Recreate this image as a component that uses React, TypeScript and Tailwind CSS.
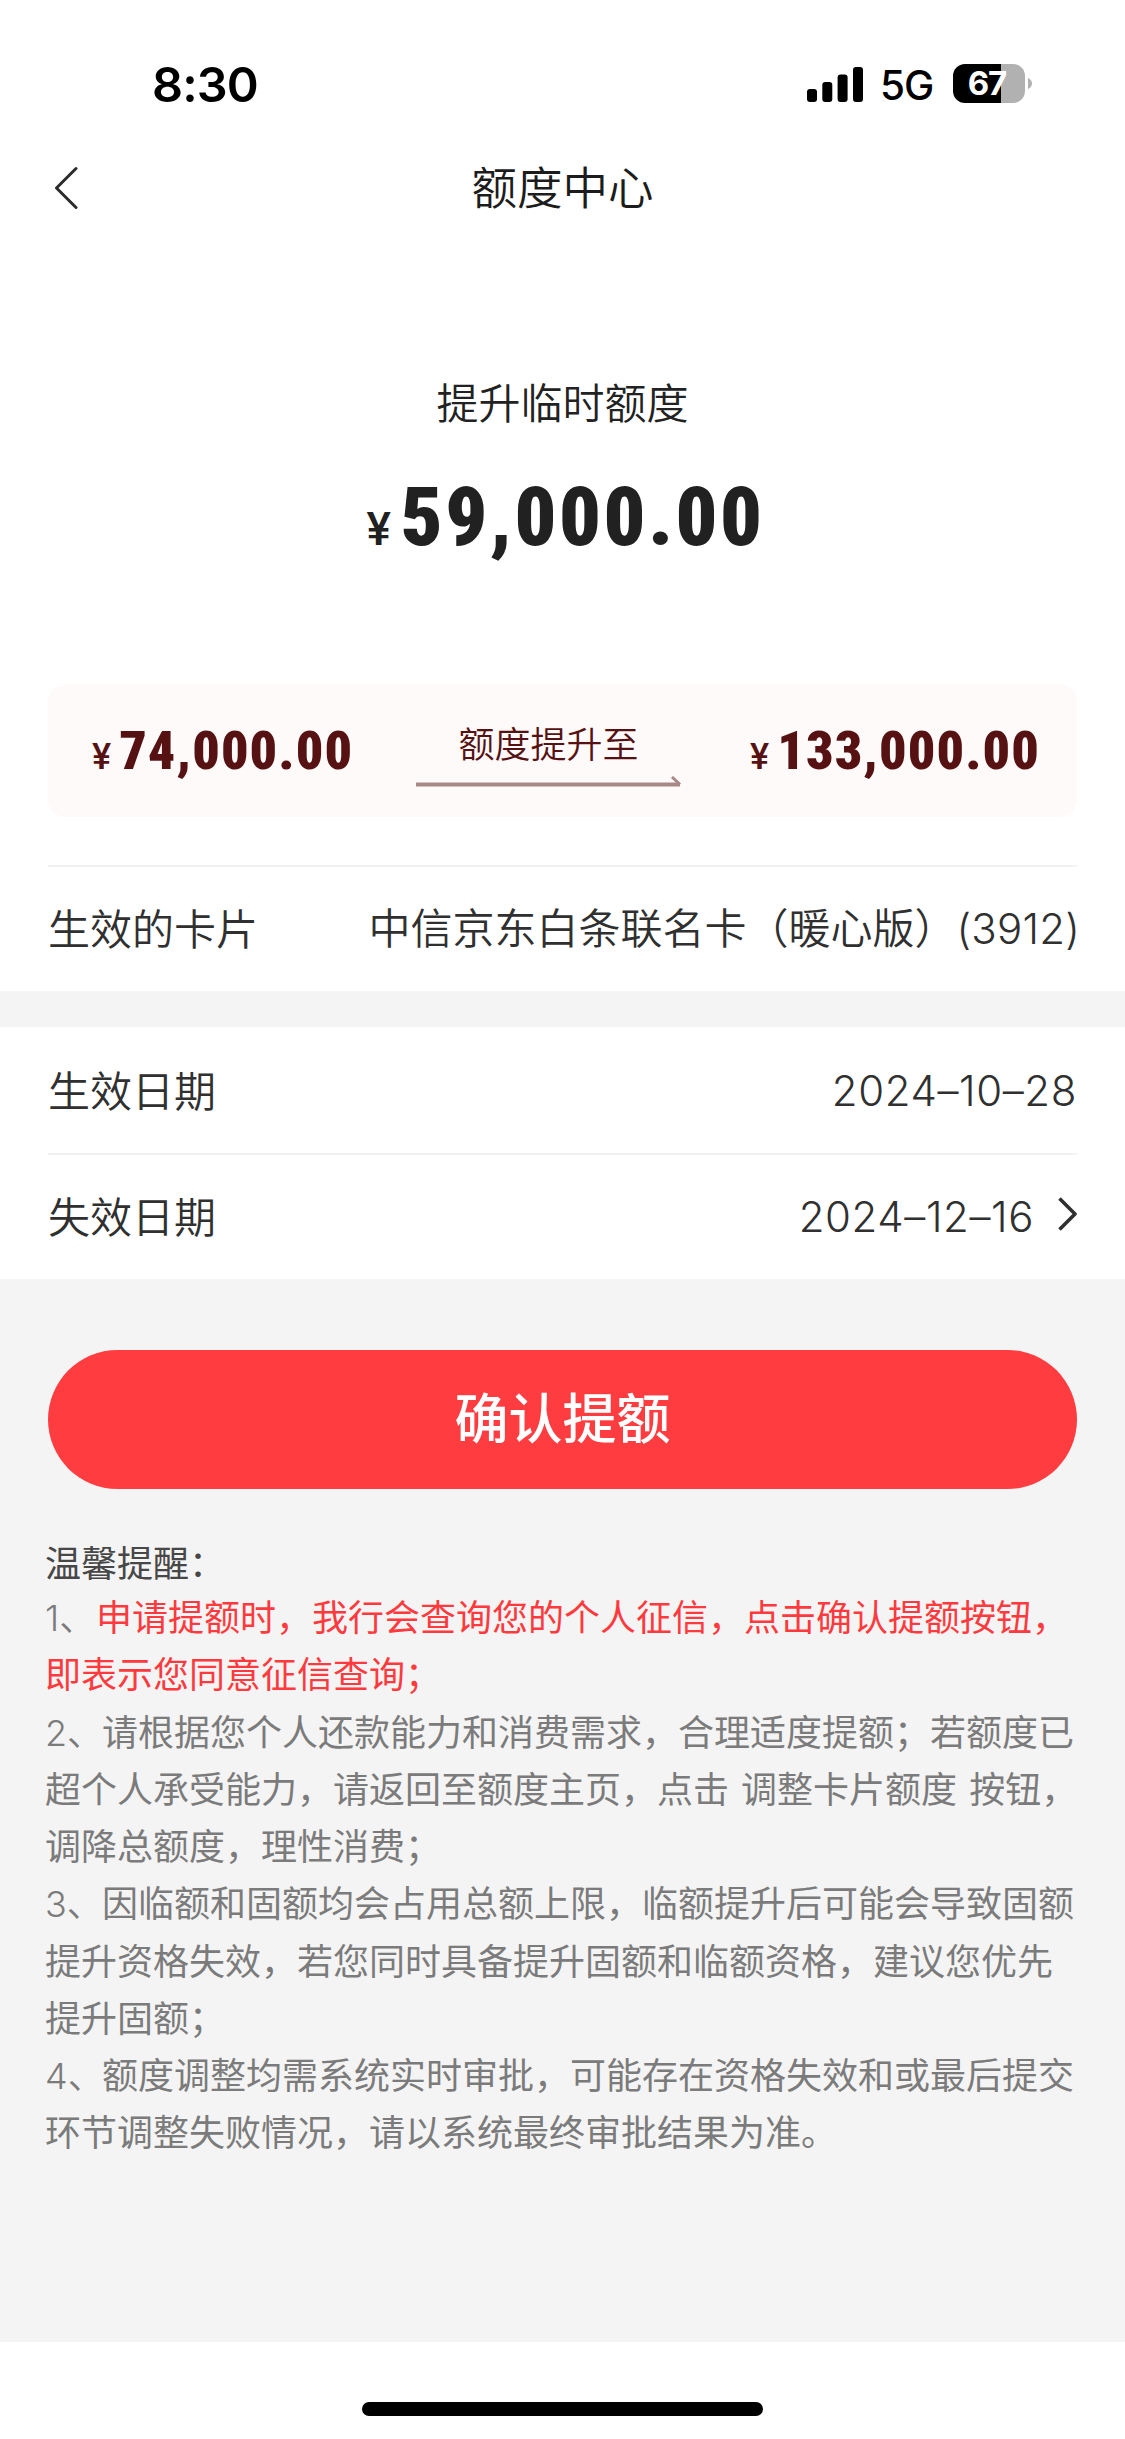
import React from 'react';

const sans = "font-['Inter','Noto_Sans_CJK_SC',sans-serif]";
const cjk = "font-['Noto_Sans_CJK_SC',sans-serif]";

const tips = [
  { mark: '2、', lines: ['请根据您个人还款能力和消费需求，合理适度提额；若额度已', '超个人承受能力，请返回至额度主页，点击 调整卡片额度 按钮，', '调降总额度，理性消费；'] },
  { mark: '3、', lines: ['因临额和固额均会占用总额上限，临额提升后可能会导致固额', '提升资格失效，若您同时具备提升固额和临额资格，建议您优先', '提升固额；'] },
  { mark: '4、', lines: ['额度调整均需系统实时审批，可能存在资格失效和或最后提交', '环节调整失败情况，请以系统最终审批结果为准。'] },
];

const StatusBar = () => (
  <div className="flex h-[130px] items-start justify-between pl-[152px] pr-[93px] pt-16 text-black">
    <span className="pt-px text-[48.5px] font-semibold leading-[40px] tracking-[-0.9px]">8:30</span>
    <div className="flex h-[39px] items-center">
      <svg className="mt-px" width="56" height="35" viewBox="0 0 56 35" fill="currentColor">
        <rect x="0" y="22" width="10" height="13" rx="3" />
        <rect x="15.3" y="15" width="10" height="20" rx="3" />
        <rect x="30.6" y="7.5" width="10" height="27.5" rx="3" />
        <rect x="46" y="0" width="10" height="35" rx="3" />
      </svg>
      <span className="ml-[17px] w-[73px] pt-1 text-[40.5px] font-[450] leading-[39px] tracking-[-1px]">5G</span>
      <div className="flex h-[39px] w-[72px] items-center justify-center overflow-hidden rounded-[12px] bg-[linear-gradient(90deg,#000_48px,#b1b1b1_48px)]">
        <span className="pr-1 text-[33px] font-bold leading-none tracking-[-1px] text-white">67</span>
      </div>
      <svg className="ml-[3px]" width="4" height="11" viewBox="0 0 4 11" fill="#b1b1b1">
        <path d="M0 0C2.4 1 4 3 4 5.5S2.4 10 0 11Z" />
      </svg>
    </div>
  </div>
);

const NavBar = () => (
  <div className="grid h-[116px] grid-cols-[200px_1fr_200px] items-center">
    <button className="pl-[54px]" aria-label="返回">
      <svg width="24" height="44" viewBox="0 0 24 44" fill="none" stroke="#2b2b2b" strokeWidth="3" strokeLinecap="round" strokeLinejoin="round">
        <path d="M22 2.5L2.5 22L22 41.5" />
      </svg>
    </button>
    <h1 className={`${cjk} pb-1 text-center text-[45.5px] font-[350] leading-none text-[#1c1c1c]`}>额度中心</h1>
  </div>
);

const SmallAmount = ({ value }: { value: string }) => (
  <div className="flex items-baseline font-[Roboto,sans-serif] text-[#561213]">
    <span className="text-[36px] font-medium leading-none">¥</span>
    <span className="ml-2 text-[54px] font-black leading-none tracking-[1.1px] [font-stretch:85%]">{value}</span>
  </div>
);

const Row = ({ label, children }: { label: string; children: React.ReactNode }) => (
  <div className="flex h-[124px] items-center justify-between pb-[5px] text-[42px] font-[350] text-[#303030]">
    <span className={cjk}>{label}</span>
    <div className="flex items-center">{children}</div>
  </div>
);

const App = () => {
  return (
    <div className={`${sans} flex h-[2439px] w-[1125px] flex-col overflow-hidden bg-white`}>
      <StatusBar />
      <NavBar />

      <section className="px-12">
        <div className="flex h-[438px] flex-col items-center pt-[134px]">
          <p className={`${cjk} text-[42px] font-[350] leading-[42px] text-[#222]`}>提升临时额度</p>
          <div className="mt-[54px] flex items-baseline pl-1.5 font-[Roboto,sans-serif] text-[#212121]">
            <span className="text-[46px] font-medium leading-none">¥</span>
            <span className="ml-[10px] text-[82px] font-black leading-none tracking-[2.6px] [font-stretch:85%]">59,000.00</span>
          </div>
        </div>

        <div className="flex h-[133px] items-center rounded-[18px] bg-[#fefaf9] pl-[44px] pr-[37px]">
          <div className="w-[324px]">
            <SmallAmount value="74,000.00" />
          </div>
          <div className="flex flex-col items-center pt-2.5">
            <span className={`${cjk} text-[36px] font-[350] leading-[36px] text-[#561213]`}>额度提升至</span>
            <svg className="mt-4" width="265" height="12" viewBox="0 0 265 12" fill="none" stroke="#a98888">
              <path d="M0 8.5H264" strokeWidth="4" />
              <path d="M256 1L264 8.5" strokeWidth="3" />
            </svg>
          </div>
          <div className="ml-auto">
            <SmallAmount value="133,000.00" />
          </div>
        </div>

        <div className="mt-12 border-t-2 border-[#f1f1f1]">
          <Row label="生效的卡片">
            <span className="-mr-[3px]">
              <span className={cjk}>中信京东白条联名卡（暖心版）</span>
              <span className="tracking-[0.2px]">(3912)</span>
            </span>
          </Row>
        </div>
      </section>

      <div className="h-9 shrink-0 bg-[#f4f4f4]" />

      <section className="px-12">
        <div className="border-b-2 border-[#f1f1f1] pt-0.5">
          <Row label="生效日期">
            <span className="pt-1 tracking-[0.6px]">2024–10–28</span>
          </Row>
        </div>
        <Row label="失效日期">
          <span className="pt-1 tracking-[0.6px]">2024–12–16</span>
          <svg className="-mt-0.5 ml-6" width="19" height="34" viewBox="0 0 19 34" fill="none" stroke="#303030" strokeWidth="3.6" strokeLinejoin="round">
            <path d="M1.5 1.5L17 17L1.5 32.5" />
          </svg>
        </Row>
      </section>

      <section className="h-[1063px] shrink-0 bg-[#f4f4f4] px-12 pt-[71px]">
        <button className={`${cjk} h-[139px] w-full rounded-full bg-[#ff3d41] pb-2 text-[54px] font-medium leading-none text-white`}>
          确认提额
        </button>
        <div className={`${cjk} -ml-[3px] mt-11 whitespace-nowrap text-[36px] leading-[57.25px] text-[#7b7b7b] [word-spacing:4px]`}>
          <p className="h-[54px] text-[#474747]">温馨提醒：</p>
          <p>
            <span className={`${sans} inline-block w-[51px] font-[350] leading-none`}>1、</span>
            <span className="text-[#ff3a3e]">
              申请提额时，我行会查询您的个人征信，点击确认提额按钮，
              <br />
              即表示您同意征信查询；
            </span>
          </p>
          {tips.map((tip) => (
            <p key={tip.mark}>
              <span className={`${sans} inline-block w-[57px] font-[350] leading-none`}>{tip.mark}</span>
              {tip.lines.map((line) => (
                <React.Fragment key={line}>
                  {line}
                  <br />
                </React.Fragment>
              ))}
            </p>
          ))}
        </div>
      </section>

      <footer className="flex flex-1 items-start justify-center bg-white pt-[60px]">
        <div className="h-[14px] w-[401px] rounded-full bg-black" />
      </footer>
    </div>
  );
};

export default App;
